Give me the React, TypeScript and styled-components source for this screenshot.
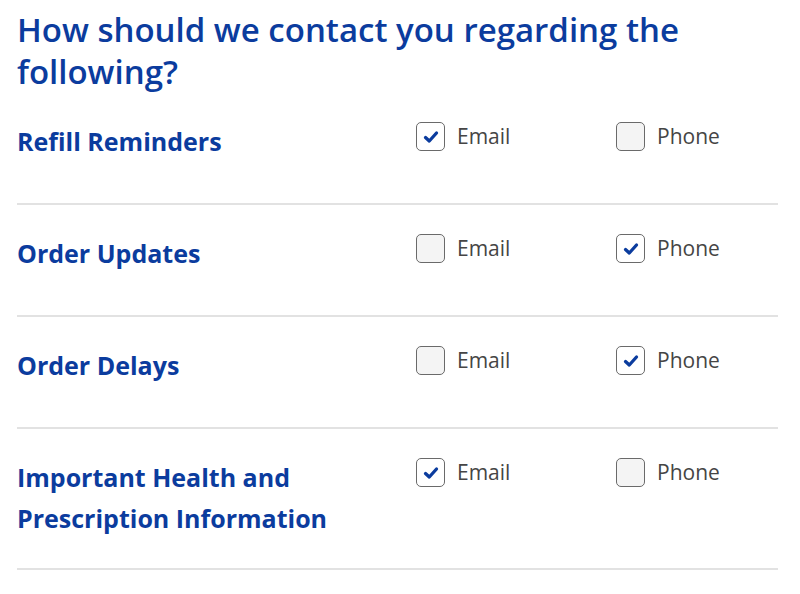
import React from "react";
import styled, { createGlobalStyle } from "styled-components";

const Global = createGlobalStyle`
  html, body { margin: 0; padding: 0; background: #ffffff; }
  body { font-family: "Open Sans", sans-serif; }
`;

const Page = styled.div`
  width: 761px;
  padding: 9px 0 0 17px;
`;

const Heading = styled.h2`
  margin: 0;
  font-family: "Open Sans", sans-serif;
  font-weight: 600;
  font-size: 33px;
  line-height: 42px;
  color: #0b3c9e;
`;

const Row = styled.div`
  display: grid;
  grid-template-columns: 399px 200px 1fr;
  align-items: start;
  padding: 28px 0 29px;
  min-height: 53px;
  border-bottom: 2px solid #e2e2e2;
`;

const Label = styled.div`
  font-family: "Open Sans", sans-serif;
  font-weight: 700;
  font-size: 25px;
  line-height: 41px;
  color: #0b3c9e;
  max-width: 340px;
`;

const Option = styled.label`
  display: flex;
  align-items: center;
  gap: 12px;
  margin-top: 0;
  font-family: "Open Sans", sans-serif;
  font-weight: 400;
  font-size: 21px;
  color: #454545;
`;

const Box = styled.span<{ $checked: boolean }>`
  box-sizing: border-box;
  width: 29px;
  height: 29px;
  margin-top: 1px;
  border: 1.5px solid #6a6a6a;
  border-radius: 5px;
  background: ${(p) => (p.$checked ? "#ffffff" : "#f4f4f4")};
  display: flex;
  align-items: center;
  justify-content: center;
`;

const Check = () => (
  <svg width="18" height="18" viewBox="0 0 18 18">
    <path d="M3.5 9.5 L7.3 13 L14.5 5" fill="none" stroke="#0b3c9e" strokeWidth="3.3" strokeLinecap="round" strokeLinejoin="round" />
  </svg>
);

const Choice = ({ text, checked }: { text: string; checked: boolean }) => (
  <Option>
    <Box $checked={checked}>{checked && <Check />}</Box>
    {text}
  </Option>
);

const rows = [
  { label: "Refill Reminders", email: true, phone: false },
  { label: "Order Updates", email: false, phone: true },
  { label: "Order Delays", email: false, phone: true },
  { label: "Important Health and Prescription Information", email: true, phone: false },
];

export default function App() {
  return (
    <Page>
      <Global />
      <Heading>How should we contact you regarding the following?</Heading>
      {rows.map((r) => (
        <Row key={r.label}>
          <Label>{r.label}</Label>
          <Choice text="Email" checked={r.email} />
          <Choice text="Phone" checked={r.phone} />
        </Row>
      ))}
    </Page>
  );
}
